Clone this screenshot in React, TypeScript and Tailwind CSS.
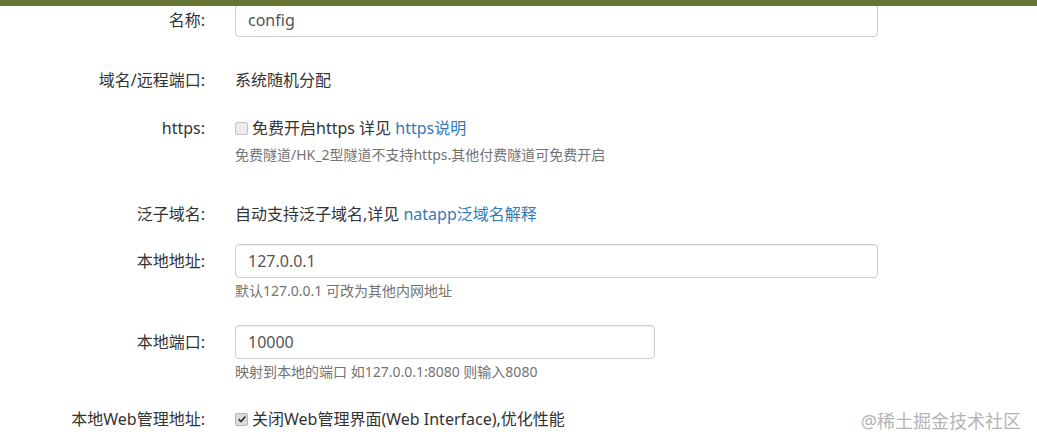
import React from "react";

const font = "font-['Noto_Sans','Noto_Sans_CJK_SC',sans-serif]";

function Label({ children, tall }: { children: React.ReactNode; tall?: boolean }) {
  return (
    <div
      className={`w-[205px] shrink-0 text-right text-[16px] text-[#333] ${
        tall ? "leading-[34px]" : "leading-[22px]"
      }`}
    >
      {children}
    </div>
  );
}

function Input({ value, width }: { value: string; width: string }) {
  return (
    <div
      className={`${width} h-[34px] rounded-[4px] border border-[#ccc] bg-white px-3 text-[16px] leading-[32px] text-[#555] shadow-[inset_0_1px_1px_rgba(0,0,0,0.075)]`}
    >
      {value}
    </div>
  );
}

function Help({ children }: { children: React.ReactNode }) {
  return <p className="mt-[3px] text-[14px] leading-[20px] text-[#737373]">{children}</p>;
}

function Checkbox({ checked }: { checked?: boolean }) {
  return (
    <span
      className={`mr-[4px] inline-flex h-[13px] w-[13px] shrink-0 items-center justify-center rounded-[2px] border ${
        checked ? "border-[#b5b5b5] bg-[#dcdcdc]" : "border-[#c4c4c4] bg-[#ececec]"
      }`}
    >
      {checked && (
        <svg viewBox="0 0 12 12" className="h-[10px] w-[10px]">
          <path d="M2 6.2 L4.8 9 L10 3" fill="none" stroke="#333" strokeWidth="2" />
        </svg>
      )}
    </span>
  );
}

export default function App() {
  return (
    <div className={`relative h-[445px] w-[1037px] overflow-hidden bg-white ${font}`}>
      {/* header bar covering the top of the form */}
      <div className="absolute left-0 right-0 top-0 z-10 h-[6px] bg-[#677632]" />

      <div className="pt-[3px]">
        {/* 名称 */}
        <div className="flex gap-[30px]">
          <Label tall>名称:</Label>
          <Input value="config" width="w-[643px]" />
        </div>

        {/* 域名/远程端口 */}
        <div className="mt-[32px] flex gap-[30px]">
          <Label>域名/远程端口:</Label>
          <div className="text-[16px] leading-[22px] text-[#333]">系统随机分配</div>
        </div>

        {/* https */}
        <div className="mt-[26px] flex gap-[30px]">
          <Label>https:</Label>
          <div>
            <div className="flex items-center text-[16px] leading-[22px] text-[#333]">
              <Checkbox />
              <span>
                免费开启https 详见 <span className="text-[#337ab7]">https说明</span>
              </span>
            </div>
            <p className="mt-[6px] text-[14px] leading-[20px] text-[#737373]">
              免费隧道/HK_2型隧道不支持https.其他付费隧道可免费开启
            </p>
          </div>
        </div>

        {/* 泛子域名 */}
        <div className="mt-[38px] flex gap-[30px]">
          <Label>泛子域名:</Label>
          <div className="text-[16px] leading-[22px] text-[#333]">
            自动支持泛子域名,详见 <span className="text-[#337ab7]">natapp泛域名解释</span>
          </div>
        </div>

        {/* 本地地址 */}
        <div className="mt-[19px] flex gap-[30px]">
          <Label tall>本地地址:</Label>
          <div>
            <Input value="127.0.0.1" width="w-[643px]" />
            <Help>默认127.0.0.1 可改为其他内网地址</Help>
          </div>
        </div>

        {/* 本地端口 */}
        <div className="mt-[24px] flex gap-[30px]">
          <Label tall>本地端口:</Label>
          <div>
            <Input value="10000" width="w-[420px]" />
            <Help>映射到本地的端口 如127.0.0.1:8080 则输入8080</Help>
          </div>
        </div>

        {/* 本地Web管理地址 */}
        <div className="mt-[26px] flex gap-[30px]">
          <Label>本地Web管理地址:</Label>
          <div className="flex items-center text-[16px] leading-[22px] text-[#333]">
            <Checkbox checked />
            <span>关闭Web管理界面(Web Interface),优化性能</span>
          </div>
        </div>
      </div>

      {/* watermark */}
      <div className="absolute right-[16px] top-[408px] text-[18px] leading-[26px] text-[#b4b4b4]">
        @稀土掘金技术社区
      </div>
    </div>
  );
}
